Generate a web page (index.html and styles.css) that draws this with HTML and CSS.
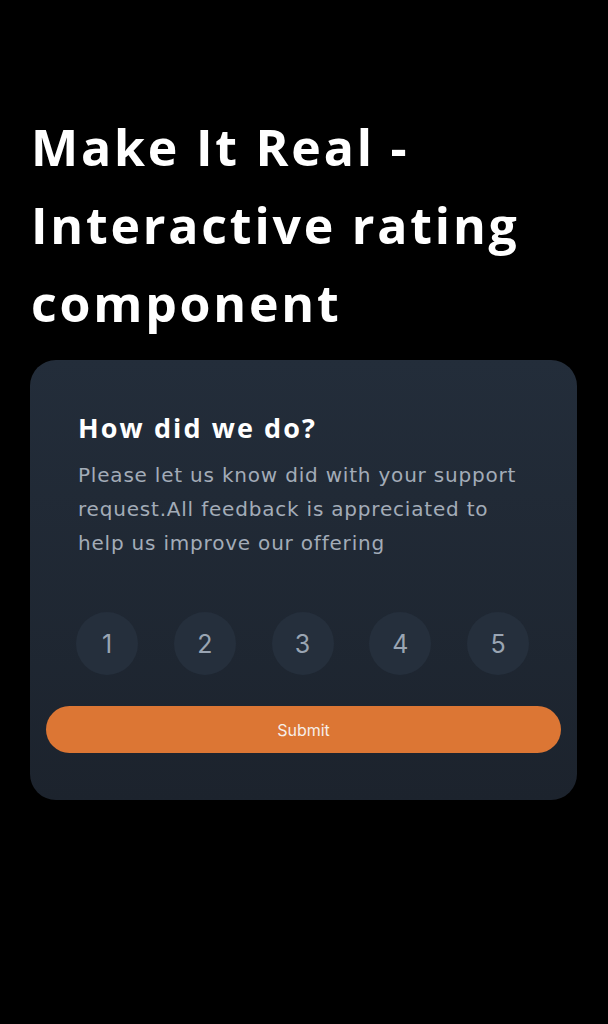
FILE: index.html
```html
<!DOCTYPE html>
<html lang="en">
<head>
<meta charset="utf-8">
<title>Interactive rating component</title>
<link rel="stylesheet" href="styles.css">
</head>
<body>
<main class="page">
  <h1 class="title">Make It Real - Interactive rating component</h1>
  <section class="card">
    <h2 class="card-title">How did we do?</h2>
    <p class="card-text">Please let us know did with your support request.All feedback is appreciated to help us improve our offering</p>
    <div class="ratings">
      <button class="rate">1</button>
      <button class="rate">2</button>
      <button class="rate">3</button>
      <button class="rate">4</button>
      <button class="rate">5</button>
    </div>
    <button class="submit">Submit</button>
  </section>
</main>
</body>
</html>
```

FILE: styles.css
```css
html, body {
  margin: 0;
  padding: 0;
  background: #000;
}
body {
  width: 608px;
  height: 1024px;
  font-family: "Open Sans", "Liberation Sans", sans-serif;
}
.page {
  padding: 108px 31px 0 30px;
}
.title {
  margin: 0 0 18px 1px;
  color: #fff;
  font-size: 50px;
  font-weight: 700;
  line-height: 78px;
  letter-spacing: 2.8px;
}
.card {
  border-radius: 26px;
  background: linear-gradient(180deg, #232d3a 0%, #1c232d 100%);
  padding: 51px 48px 47px 48px;
  display: flex;
  flex-direction: column;
}
.card-title {
  margin: 0;
  color: #fff;
  font-size: 27px;
  font-weight: 700;
  line-height: 34px;
  letter-spacing: 2.1px;
}
.card-text {
  margin: 13px 0 0;
  color: #a3acb8;
  font-family: "DejaVu Sans", "Open Sans", sans-serif;
  font-size: 20px;
  font-weight: 400;
  line-height: 34px;
  letter-spacing: 0.8px;
}
.ratings {
  margin-top: 52px;
  display: flex;
  justify-content: space-between;
  margin-left: -2px;
}
.rate {
  width: 62px;
  height: 63px;
  border: none;
  border-radius: 50%;
  background: #252f3c;
  color: #9aa5b3;
  font-family: Inter, "Liberation Sans", sans-serif;
  font-size: 25px;
  padding: 0;
}
.submit {
  margin: 31px -32px 0 -32px;
  height: 47px;
  border: none;
  border-radius: 24px;
  background: #dc7634;
  color: #f6eee8;
  font-family: Inter, "Liberation Sans", sans-serif;
  font-size: 16px;
  padding: 0;
}
```
